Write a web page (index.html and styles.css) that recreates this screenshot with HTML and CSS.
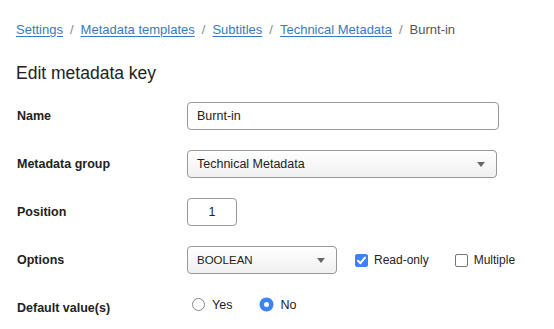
FILE: index.html
```html
<!DOCTYPE html>
<html>
  <head>
    <title>Edit metadata key</title>
    <link rel="stylesheet" href="styles.css">
  </head>
  <body>
    <nav class="breadcrumb">
      <a href="#">Settings</a>
      <span class="sep">/</span>
      <a href="#">Metadata templates</a>
      <span class="sep">/</span>
      <a href="#">Subtitles</a>
      <span class="sep">/</span>
      <a href="#">Technical Metadata</a>
      <span class="sep">/</span>
      <span class="current">Burnt-in</span>
    </nav>

    <h1 class="page-title">Edit metadata key</h1>

    <form class="form">
      <div class="form-row">
        <label class="form-label" for="name">Name</label>
        <input class="text-input name-input" type="text" id="name" value="Burnt-in" />
      </div>

      <div class="form-row">
        <label class="form-label" for="group">Metadata group</label>
        <div class="select group-select">Technical Metadata</div>
      </div>

      <div class="form-row">
        <label class="form-label" for="position">Position</label>
        <input class="text-input position-input" type="text" id="position" value="1" />
      </div>

      <div class="form-row">
        <span class="form-label">Options</span>
        <div class="select options-select">BOOLEAN</div>
        <label class="check">
          <span class="check-box checked"></span>
          Read-only
        </label>
        <label class="check">
          <span class="check-box"></span>
          Multiple
        </label>
      </div>

      <div class="form-row">
        <span class="form-label">Default value(s)</span>
        <label class="radio">
          <span class="radio-dot"></span>
          Yes
        </label>
        <label class="radio">
          <span class="radio-dot checked"></span>
          No
        </label>
      </div>
    </form>
  </body>
</html>
```

FILE: styles.css
```css
:root {
  --link-color: #3b78c4;
  --text-primary: #222;
  --text-muted: #555;
  --border-color: #999;
  --accent: #3a84f5;
}

body {
  margin: 0;
  padding: 22px 16px 0 16px;
  font-family: 'Liberation Sans', Arial, sans-serif;
  color: var(--text-primary);
  background: #fff;
}

/* Breadcrumb */
.breadcrumb {
  font-size: 13px;
  line-height: 16px;
  display: flex;
  align-items: center;
  white-space: nowrap;
}
.breadcrumb a {
  color: var(--link-color);
  text-decoration: underline;
  text-underline-offset: 2px;
}
.breadcrumb .sep {
  color: #888;
  margin: 0 7px;
}
.breadcrumb .current {
  color: var(--text-muted);
}

.page-title {
  font-size: 17.5px;
  font-weight: 400;
  line-height: 24px;
  margin: 23px 0 17px 0;
}

/* Form rows */
.form-row {
  display: flex;
  align-items: center;
  height: 28px;
  margin-bottom: 20px;
  font-size: 12.5px;
  white-space: nowrap;
}
.form-row > * {
  flex-shrink: 0;
}

.form-label {
  width: 170px;
  font-size: 12.5px;
  font-weight: 700;
  padding-left: 1px;
}

.text-input {
  box-sizing: border-box;
  height: 28px;
  border: 1px solid var(--border-color);
  border-radius: 4px;
  padding: 0 9px;
  font-family: inherit;
  font-size: 12.5px;
  color: var(--text-primary);
  outline: none;
}
.name-input {
  width: 312px;
}
.position-input {
  width: 50px;
  text-align: center;
}

.select {
  box-sizing: border-box;
  height: 28px;
  display: flex;
  align-items: center;
  border: 1px solid var(--border-color);
  border-radius: 4px;
  padding: 0 9px;
  background: linear-gradient(#fff, #f0f0f0);
  position: relative;
}
.select:after {
  content: '';
  position: absolute;
  right: 11px;
  top: 11px;
  border-left: 4px solid transparent;
  border-right: 4px solid transparent;
  border-top: 5px solid #666;
}
.group-select {
  width: 310px;
}
.options-select {
  width: 150px;
  font-size: 11.5px;
  margin-right: 18px;
}

/* Checkboxes */
.check {
  display: flex;
  align-items: center;
  gap: 6px;
  margin-right: 26px;
  font-size: 12px;
}
.check-box {
  box-sizing: border-box;
  width: 13px;
  height: 13px;
  border: 1px solid #777;
  border-radius: 2px;
  background: #fff;
}
.check-box.checked {
  border-color: var(--accent);
  background-color: var(--accent);
  background-image: url("data:image/svg+xml,%3Csvg xmlns='http://www.w3.org/2000/svg' width='13' height='13' viewBox='0 0 13 13' fill='none' stroke='white' stroke-width='2' stroke-linecap='round' stroke-linejoin='round'%3E%3Cpolyline points='3 6.8 5.4 9.2 10 3.6'/%3E%3C/svg%3E");
  background-position: center;
  background-repeat: no-repeat;
}

/* Radios */
.radio {
  display: flex;
  align-items: center;
  gap: 7px;
  margin: 0 28px 7px 5px;
}
.radio + .radio {
  margin-left: 0;
}
.radio-dot {
  box-sizing: border-box;
  width: 13px;
  height: 13px;
  border: 1px solid #888;
  border-radius: 50%;
  background: #fff;
}
.radio-dot.checked {
  border: 4px solid var(--accent);
  background: #fff;
  box-shadow: 0 0 0 0.5px var(--accent);
}
```
